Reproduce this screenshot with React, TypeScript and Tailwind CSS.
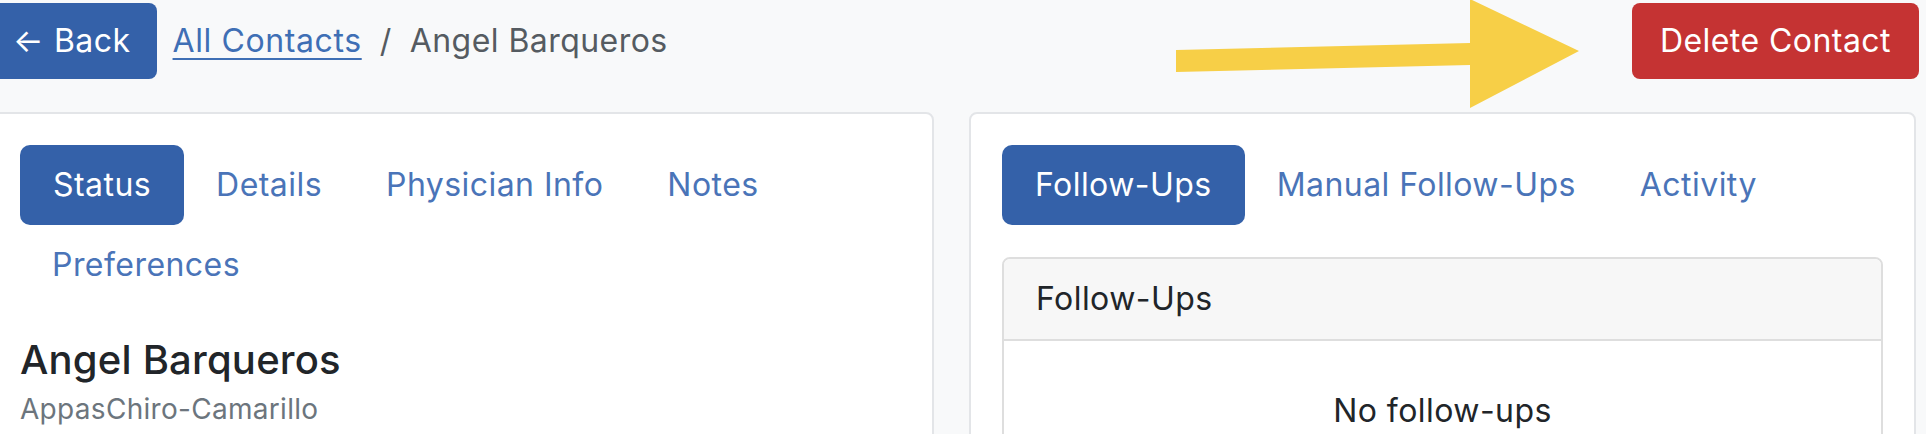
import React from 'react'

const leftTabs = ['Status', 'Details', 'Physician Info', 'Notes', 'Preferences']
const rightTabs = ['Follow-Ups', 'Manual Follow-Ups', 'Activity']

function Tabs({ tabs }: { tabs: string[] }) {
  return (
    <div className="flex flex-wrap">
      {tabs.map((t, i) => (
        <div
          key={t}
          className={
            i === 0
              ? 'h-[80px] px-[33px] flex items-center rounded-[10px] bg-[#3461a9] text-white'
              : 'h-[80px] px-[32px] flex items-center text-[#4a74b8]'
          }
        >
          {t}
        </div>
      ))}
    </div>
  )
}

export default function App() {
  return (
    <div
      className="relative min-h-screen overflow-hidden bg-[#f8f9fa] text-[32px] leading-[48px] tracking-[0.45px]"
      style={{ fontFamily: 'Inter, "Noto Sans", sans-serif' }}
    >
      <div className="ml-[-13px] w-[1930px] pt-[3px]">
        {/* barre du haut */}
        <div className="flex items-center justify-between">
          <div className="flex items-center">
            <button className="h-[76px] px-[26px] flex items-center gap-[10px] rounded-[8px] bg-[#3461a9] text-white">
              <span>←</span>
              <span>Back</span>
            </button>
            <div className="ml-[16px] flex items-center text-[#555b61]">
              <a className="text-[#3f6fb5] underline underline-offset-[6px] decoration-[2px] tracking-[0.6px]">
                All Contacts
              </a>
              <span className="px-[18px]">/</span>
              <span>Angel Barqueros</span>
            </div>
          </div>
          <button className="mr-[-2px] h-[76px] px-[28px] flex items-center rounded-[8px] bg-[#c53333] text-white">
            Delete Contact
          </button>
        </div>

        {/* cartes */}
        <div className="mt-[33px] grid grid-cols-[947px_947px] gap-[35px]">
          <div className="h-[400px] rounded-[8px] border-2 border-[#e3e5e8] bg-white px-[31px] pt-[31px]">
            <Tabs tabs={leftTabs} />
            <h5 className="mt-[31px] text-[40px] leading-[48px] font-medium tracking-[0.2px] text-[#212529]">
              Angel Barqueros
            </h5>
            <p className="mt-[4px] text-[28px] leading-[42px] tracking-[0.3px] text-[#6c757d]">AppasChiro-Camarillo</p>
          </div>

          <div className="h-[400px] rounded-[8px] border-2 border-[#e3e5e8] bg-white px-[31px] pt-[31px]">
            <Tabs tabs={rightTabs} />
            <div className="mt-[32px] rounded-[8px] border-2 border-[#dedede] overflow-hidden">
              <div className="h-[82px] px-[32px] flex items-center bg-[#f7f7f7] border-b-2 border-[#dedede] text-[#212529]">
                Follow-Ups
              </div>
              <div className="pt-[46px] pb-[40px] text-center text-[#212529]">No follow-ups</div>
            </div>
          </div>
        </div>
      </div>

      {/* flèche jaune */}
      <svg className="absolute left-0 top-0 pointer-events-none" width="1926" height="120">
        <polygon
          points="1176,50 1470,43 1470,-1 1579,51 1470,108 1470,65 1176,72"
          fill="#f7cf47"
        />
      </svg>
    </div>
  )
}
